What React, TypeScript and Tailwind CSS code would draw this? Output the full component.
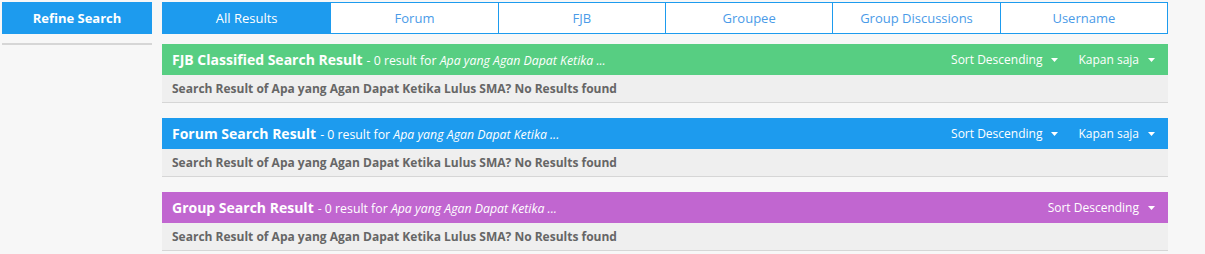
import React from 'react';

const tabs = ['All Results', 'Forum', 'FJB', 'Groupee', 'Group Discussions', 'Username'];

interface Section {
  title: string;
  color: string;
  filters: string[];
}

const sections: Section[] = [
  { title: 'FJB Classified Search Result', color: 'bg-[#57ce82]', filters: ['Sort Descending', 'Kapan saja'] },
  { title: 'Forum Search Result', color: 'bg-[#1d9bee]', filters: ['Sort Descending', 'Kapan saja'] },
  { title: 'Group Search Result', color: 'bg-[#c166d0]', filters: ['Sort Descending'] },
];

const Caret = () => (
  <svg width="7" height="4" viewBox="0 0 7 4" className="ml-[9px]">
    <path d="M0 0h7L3.5 4z" fill="#ffffff" />
  </svg>
);

const ResultBlock: React.FC<{ section: Section }> = ({ section }) => (
  <div className="mb-[15px]">
    <div className={`${section.color} h-[31px] flex items-center justify-between pl-[10px] pr-[13px] text-white`}>
      <div className="flex items-baseline whitespace-nowrap">
        <span className="text-[14px] font-bold">{section.title}</span>
        <span className="text-[12.3px] ml-[4px]">- 0 result for <i>Apa yang Agan Dapat Ketika ...</i></span>
      </div>
      <div className="flex items-center gap-[20px] text-[12px]">
        {section.filters.map((f) => (
          <div key={f} className="flex items-center">
            <span>{f}</span>
            <Caret />
          </div>
        ))}
      </div>
    </div>
    <div className="h-[28px] bg-[#efefef] border-b border-[#d6d6d6] flex items-center pl-[10px] text-[12px] font-bold text-[#666666]">
      Search Result of Apa yang Agan Dapat Ketika Lulus SMA? No Results found
    </div>
  </div>
);

export default function App() {
  return (
    <div className="w-[1205px] h-[254px] bg-[#f7f7f7] overflow-hidden flex gap-[10px] pl-[2px] pt-[2px]" style={{ fontFamily: '"Open Sans", "Liberation Sans", sans-serif' }}>
      <div className="w-[150px] shrink-0">
        <div className="h-[32px] pt-[1px] bg-[#1d9bee] text-white text-[13px] font-bold flex items-center justify-center">Refine Search</div>
        <div className="mt-[9px] h-[2px] bg-[#d6d6d6]" />
      </div>
      <div className="w-[1006px] shrink-0">
        <div className="grid grid-cols-6 h-[32px] border border-[#1d9bee] bg-white">
          {tabs.map((t, i) => (
            <div
              key={t}
              className={
                i === 0
                  ? 'bg-[#1d9bee] text-white text-[13px] pt-[1px] flex items-center justify-center'
                  : 'border-l border-[#1d9bee] text-[#4a9be8] text-[13px] pt-[1px] flex items-center justify-center'
              }
            >
              {t}
            </div>
          ))}
        </div>
        <div className="mt-[10px]">
          {sections.map((s) => (
            <ResultBlock key={s.title} section={s} />
          ))}
        </div>
      </div>
    </div>
  );
}
